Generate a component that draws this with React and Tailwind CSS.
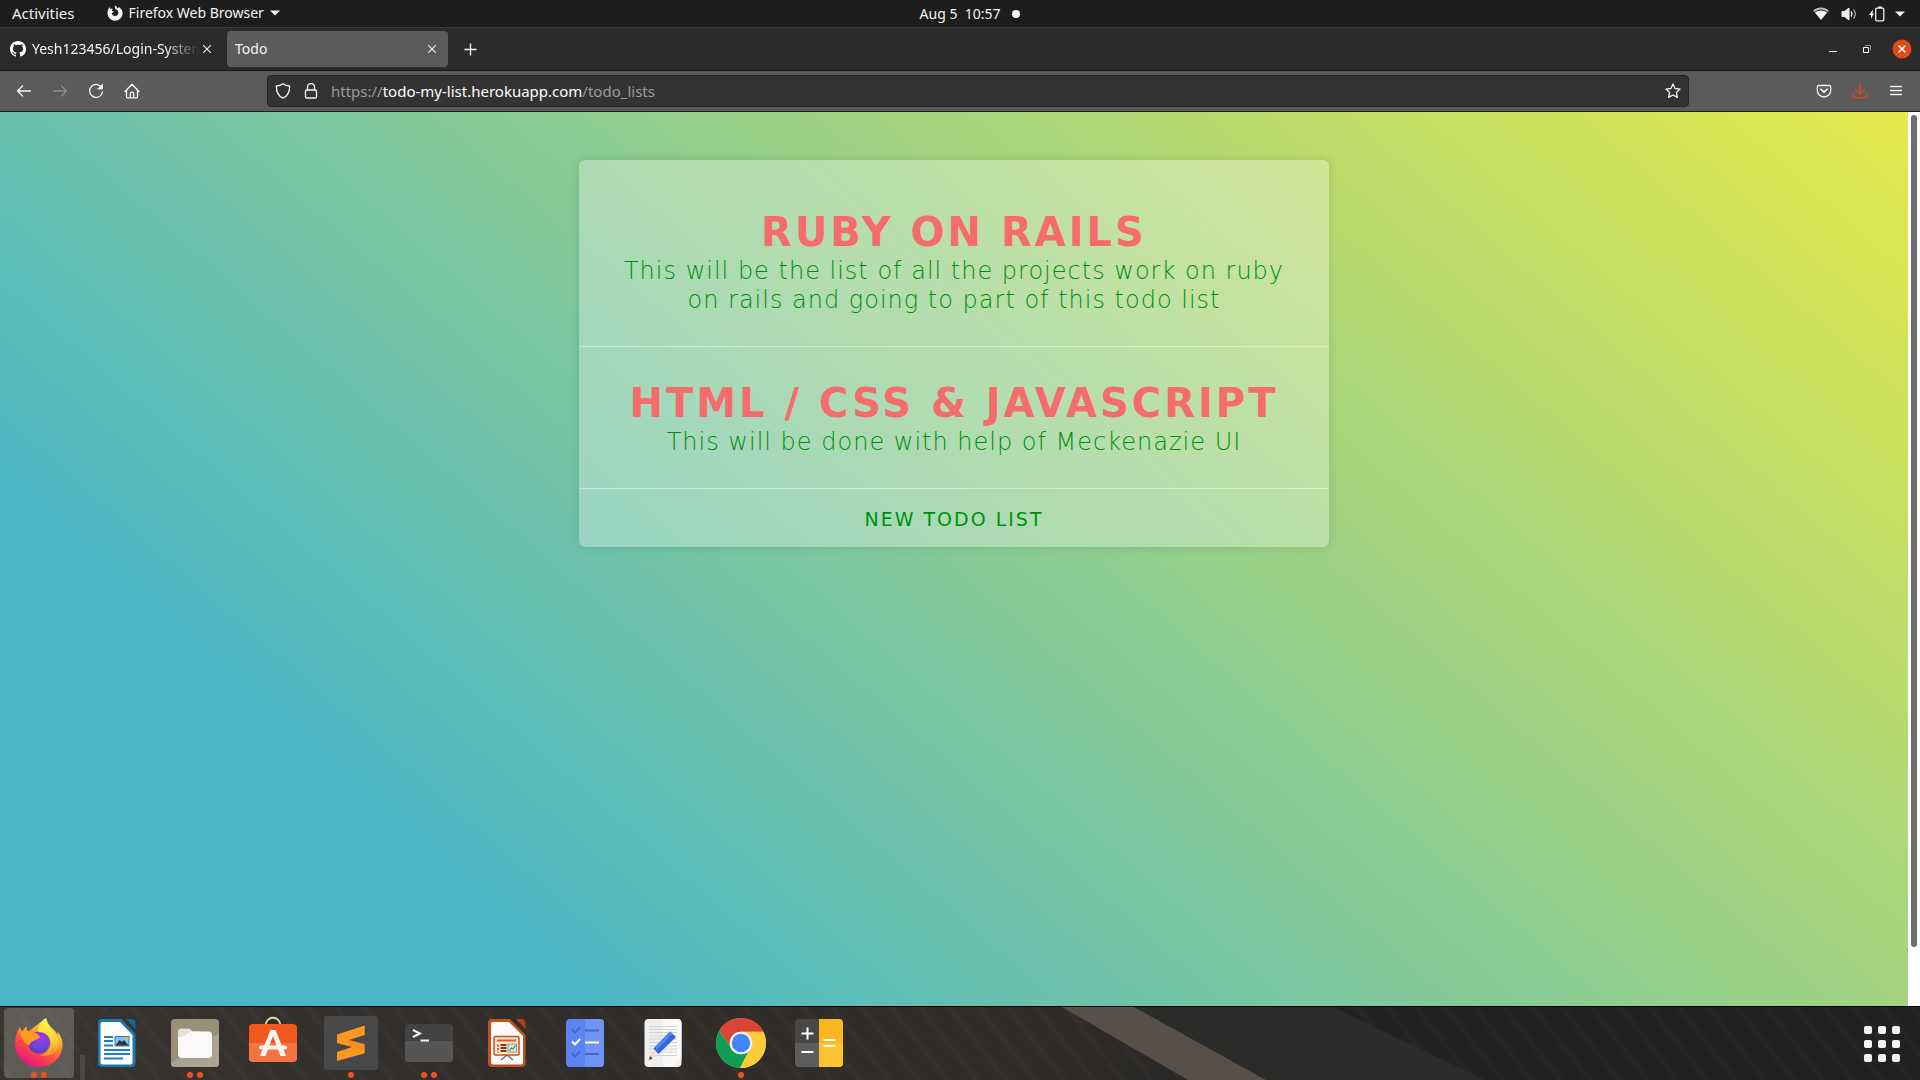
import React from "react";

const lists = [
  {
    title: "Ruby on Rails",
    text: "This will be the list of all the projects work on ruby on rails and going to part of this todo list",
  },
  {
    title: "HTML / CSS & JavaScript",
    text: "This will be done with help of Meckenazie UI",
  },
];

function Caret() {
  return (
    <svg width="10" height="6" viewBox="0 0 10 6" fill="#f2f2f2">
      <path d="M0 .5h10L5 5.5z" />
    </svg>
  );
}

function TopBar() {
  return (
    <header className="grid h-7 shrink-0 grid-cols-3 items-center border-b border-[#3c3c3c] bg-[#1d1d1d] text-sm text-[#f2f2f2]">
      <div className="flex items-center gap-8 pl-3">
        <button type="button" className="text-[15px]">Activities</button>
        <button type="button" className="flex items-center gap-1.5">
          <svg width="16" height="16" viewBox="0 0 16 16" fill="#f2f2f2">
            <path d="M8 .3c1.300.8 2 1.800 2.200 2.900 1-.1 1.500-.5 1.700-1.200C14.300 3.500 15.600 5.500 15.600 8.200A7.500 7.500 0 0 1 8 15.800 7.500 7.500 0 0 1 .5 8.200C.5 5.900 1.300 3.800 2.800 2.100c.1.900.4 1.500.9 1.900.7-.2 1.400-.2 2 0-.5.8-.9 1.300-.7 2 .5.3 1.200.3 1.900.4-.2.9-1.500 1.200-2.100 1.700.1 1.800 1.500 3 3.200 3 2 0 3.400-1.400 3.400-3.300 0-1.700-1-2.700-2.200-3.200C8.100 4.100 7.500 2.400 8 .3z" />
          </svg>
          <span>Firefox Web Browser</span>
          <Caret />
        </button>
      </div>
      <button type="button" className="flex items-center justify-center gap-3 pl-5">
        <span className="whitespace-pre">Aug 5  10:57</span>
        <span className="size-2 rounded-full bg-[#f2f2f2]" />
      </button>
      <button type="button" aria-label="System menu" className="flex items-center justify-end gap-2.5 pr-[15px]">
        <span className="flex items-center gap-3">
          <svg width="16" height="14" viewBox="0 0 16 14" fill="#f2f2f2">
            <path d="M0 3.800C4.500-.6 11.500-.6 16 3.800L14.700 5C10.900 1.600 5.100 1.600 1.300 5z" opacity=".75" />
            <path d="M1.800 5.600C5.400 2.700 10.600 2.700 14.200 5.600L8 13z" />
          </svg>
          <svg width="16" height="14" viewBox="0 0 16 14" fill="none" stroke="#f2f2f2">
            <path d="M1 4.500h2.500L8 1v12L3.500 9.500H1z" fill="#f2f2f2" />
            <path d="M10 4.500c1.200 1.500 1.200 3.500 0 5" strokeWidth="1.300" />
            <path d="M12.500 2.500c2.200 2.700 2.200 6.300 0 9" strokeWidth="1.200" opacity=".7" />
          </svg>
          <svg width="16" height="16" viewBox="0 0 16 16">
            <path d="M4 3.500 0 9h2v4l3-5.500H3.500z" fill="#f2f2f2" />
            <rect x="6.700" y="2.200" width="8.100" height="12.600" rx="1.200" fill="none" stroke="#f2f2f2" strokeWidth="1.300" />
            <path d="M9 .5h4v1.500H9z" fill="#f2f2f2" />
          </svg>
        </span>
        <Caret />
      </button>
    </header>
  );
}

function Cross() {
  return (
    <svg width="8" height="8" viewBox="0 0 8 8" stroke="#eee" strokeWidth="1.100">
      <path d="M0 0 8 8M8 0 0 8" />
    </svg>
  );
}

function TabBar() {
  return (
    <nav aria-label="Tabs" className="flex h-[43px] shrink-0 items-center border-b border-[#161616] bg-[#2b2b2b] text-sm text-[#f5f5f5]">
      <div className="flex h-9 w-[223px] items-center gap-1 pl-2.5">
        <svg width="16" height="16" viewBox="0 0 16 16" fill="#fff" className="shrink-0">
          <path d="M8 0C3.580 0 0 3.580 0 8c0 3.540 2.290 6.530 5.470 7.590.4.070.55-.17.55-.38 0-.19-.01-.82-.01-1.490-2.010.37-2.530-.49-2.690-.94-.09-.23-.48-.94-.82-1.130-.28-.15-.68-.52-.01-.53.63-.01 1.080.58 1.230.82.72 1.210 1.870.87 2.330.66.070-.52.28-.87.51-1.070-1.780-.2-3.640-.89-3.640-3.950 0-.87.31-1.590.82-2.150-.08-.2-.36-1.020.08-2.120 0 0 .67-.21 2.200.82.64-.18 1.320-.27 2-.27s1.360.09 2 .27c1.530-1.040 2.200-.82 2.200-.82.44 1.100.16 1.920.08 2.120.51.56.82 1.270.82 2.150 0 3.070-1.870 3.750-3.650 3.950.29.25.54.73.54 1.480 0 1.070-.01 1.930-.01 2.200 0 .21.15.46.55.38A8.010 8.010 0 0 0 16 8c0-4.420-3.580-8-8-8z" />
        </svg>
        <a href="#github" className="w-[169px] overflow-hidden pl-0.5 whitespace-nowrap [mask-image:linear-gradient(to_right,black_80%,transparent)]">
          Yesh123456/Login-System
        </a>
        <button type="button" aria-label="Close Yesh123456 tab">
          <Cross />
        </button>
      </div>
      <div className="ml-1 flex h-9 w-[221px] items-center justify-between rounded bg-[#5b5b5b] pl-2 pr-3">
        <a href="#todo">Todo</a>
        <button type="button" aria-label="Close Todo tab">
          <Cross />
        </button>
      </div>
      <button type="button" aria-label="New tab" className="ml-4">
        <svg width="13" height="13" viewBox="0 0 13 13" stroke="#fff" strokeWidth="1.300">
          <path d="M6.500.5v12M.5 6.500h12" />
        </svg>
      </button>
      <div className="ml-auto flex items-center gap-5 pr-2">
        <div className="flex items-center gap-6">
          <button type="button" aria-label="Minimize">
            <svg width="10" height="10" viewBox="0 0 10 10" fill="#fff">
              <path d="M1 7h8v1H1z" />
            </svg>
          </button>
          <button type="button" aria-label="Restore">
            <svg width="10" height="10" viewBox="0 0 10 10" fill="none">
              <path d="M3 1.500h5.500v5" stroke="#999" />
              <path d="M1.500 3.500h5v5h-5z" stroke="#fff" />
            </svg>
          </button>
        </div>
        <button type="button" aria-label="Close window">
          <svg width="20" height="20" viewBox="0 0 20 20">
            <circle cx="10" cy="10" r="9.500" fill="#df4a16" />
            <path d="m6.500 6.500 7 7M13.500 6.500l-7 7" stroke="#fff" strokeWidth="1.500" />
          </svg>
        </button>
      </div>
    </nav>
  );
}

function Line({ size = 16, color = "#f5f5f5", children }) {
  return (
    <svg width={size} height={size} viewBox="0 0 16 16" fill="none" stroke={color} strokeWidth="1.300" strokeLinecap="round" strokeLinejoin="round" className="shrink-0">
      {children}
    </svg>
  );
}

function Toolbar() {
  return (
    <div className="flex h-[41px] shrink-0 items-center border-b border-[#202020] bg-[#5b5b5b]">
      <div className="flex w-[267px] items-center gap-5 pl-4">
        <button type="button" aria-label="Back">
          <Line>
            <path d="M14.500 8h-13M6.500 3 1.500 8l5 5" />
          </Line>
        </button>
        <button type="button" aria-label="Forward" disabled>
          <Line color="#8e8e8e">
            <path d="M1.500 8h13M9.500 3l5 5-5 5" />
          </Line>
        </button>
        <button type="button" aria-label="Reload">
          <Line>
            <path d="M14 5.200A6.500 6.500 0 1 0 14.500 9" />
            <path d="M14.500 1.500v4.500H10z" fill="#f5f5f5" strokeWidth=".8" />
          </Line>
        </button>
        <button type="button" aria-label="Home">
          <Line>
            <path d="M1 8.500 8 1.200l7 7.300M2.500 7.500v6.300a1 1 0 0 0 1 1h9a1 1 0 0 0 1-1V7.500" />
            <path d="M6.300 14.500v-3.700a1.700 1.700 0 0 1 3.400 0v3.700" />
          </Line>
        </button>
      </div>
      <div className="flex h-8 flex-1 items-center gap-3 rounded border border-[#222] bg-[#333] px-[7px]">
        <Line>
          <path d="M8 .8c2 1.500 4.300 2.100 6.600 2.200.2 6-1.800 10-6.600 12.200C3.200 13 1.200 9 1.400 3 3.700 2.900 6 2.300 8 .8z" />
        </Line>
        <Line>
          <path d="M4.500 7V4a3.500 3.500 0 0 1 7 0v3" />
          <rect x="2.500" y="7" width="11" height="8" rx="1.200" />
        </Line>
        <label className="relative flex-1 text-[15px] text-[#9b9b9b]">
          <span className="whitespace-nowrap">
            https://<span className="text-white">todo-my-list.herokuapp.com</span>/todo_lists
          </span>
          <input type="text" aria-label="Address" className="absolute inset-0 w-full bg-transparent outline-none" />
        </label>
        <button type="button" aria-label="Bookmark this page">
          <Line>
            <path d="m8 1 2.100 4.500 4.900.6-3.600 3.400 1 4.900L8 12l-4.400 2.400 1-4.900L1 6.100l4.900-.6z" />
          </Line>
        </button>
      </div>
      <div className="flex w-[231px] items-center justify-end gap-5 pr-4">
        <button type="button" aria-label="Save to Pocket">
          <Line>
            <path d="M2.500 2.500h11a1.200 1.200 0 0 1 1.200 1.200v3.600a6.700 6.700 0 0 1-13.400 0V3.700a1.200 1.200 0 0 1 1.200-1.200z" />
            <path d="m4.800 6.200 3.200 3 3.200-3" strokeWidth="1.600" />
          </Line>
        </button>
        <button type="button" aria-label="Downloads">
          <Line color="#df4a16">
            <path d="M8 .7v10.300M3.800 7 8 11l4.200-4M1.500 11.500v1.700a1.500 1.500 0 0 0 1.500 1.500h10a1.500 1.500 0 0 0 1.500-1.500v-1.700" />
          </Line>
        </button>
        <button type="button" aria-label="Application menu">
          <Line>
            <path d="M2.500 3.500h11M2.500 7.500h11M2.500 11.500h11" />
          </Line>
        </button>
      </div>
    </div>
  );
}

function TodoPage() {
  return (
    <div className="flex min-h-0 flex-1 bg-white">
      <div className="flex-1 overflow-hidden">
        <main className="h-[107%] bg-[linear-gradient(41deg,#4bb7c6_22%,#e5e94a_100%)] pt-12 font-['DejaVu_Sans',sans-serif]">
          <section className="mx-auto w-full max-w-[750px] rounded-md bg-white/30 pt-4 text-center shadow-[0_0_10px_rgba(0,0,0,0.12)]">
            {lists.map((list) => (
              <article key={list.title} className="border-b border-white/40 px-8 pt-8 pb-[31px]">
                <h1 className="text-[40px] leading-[48px] font-bold tracking-[3px] text-[#f66b6b] uppercase">
                  <a href="#list">{list.title}</a>
                </h1>
                <p className="pt-px text-2xl leading-[29px] font-extralight tracking-[1px] text-[#008f0c]">{list.text}</p>
              </article>
            ))}
            <a href="#new" className="block pt-[17px] pb-[15px] text-[19px] leading-[26px] tracking-[2px] text-[#008f0c] uppercase">
              New Todo List
            </a>
          </section>
        </main>
      </div>
      <div className="flex w-3 justify-center pt-[3px]">
        <div className="h-[calc(100%-59px)] w-1.5 rounded-full bg-[#6d6d6d]" />
      </div>
    </div>
  );
}

function Icon({ children }) {
  return (
    <svg width="56" height="56" viewBox="-4 -4 56 56">
      {children}
    </svg>
  );
}

const apps = [
  {
    name: "Firefox",
    dots: 2,
    active: true,
    icon: (
      <Icon>
        <defs>
          <linearGradient id="ffBody" x1=".85" y1=".05" x2=".3" y2="1">
            <stop offset="0" stopColor="#fff44f" />
            <stop offset=".35" stopColor="#ffa02e" />
            <stop offset=".65" stopColor="#ff4b3e" />
            <stop offset="1" stopColor="#e3128a" />
          </linearGradient>
          <linearGradient id="ffTail" x1=".5" y1="0" x2=".6" y2="1">
            <stop offset="0" stopColor="#fff44f" />
            <stop offset=".6" stopColor="#ffd235" />
            <stop offset="1" stopColor="#ff8f2a" />
          </linearGradient>
          <radialGradient id="ffGlobe" cx=".6" cy=".3" r=".8">
            <stop offset="0" stopColor="#a238e8" />
            <stop offset=".6" stopColor="#6b45d8" />
            <stop offset="1" stopColor="#4a3bb0" />
          </radialGradient>
        </defs>
        <path d="M5 8c.5 2 1.500 3.500 2.500 4.500C9 10 10 8.500 11.500 7.500c-.2 2.500.5 4 2 5L31-1c1.500 6 5 9 9 13 1 1.200 2 2.500 2.500 4 .3-1.500.2-2.500 0-3.500 4 5 5.500 10 5 15C46.500 39 37 48 24 48S0 38 0 25C0 18 2 12 5 8z" fill="url(#ffBody)" />
        <circle cx="24" cy="23.500" r="11" fill="url(#ffGlobe)" />
        <path d="M31-1c-6 4-8.500 9-7.500 14 6 0 10.500 3 12 8 1.500 7-3 14-10.500 15.500 10 2 18-3 19.500-11C45 15 33.500 12 31-1z" fill="url(#ffTail)" />
        <path d="M5 8c.5 2 1.500 3.500 2.500 4.500C9 10 10 8.500 11.500 7.500c-.2 2.500.5 4 2 5 3.500.2 6 .6 8 2 1.500 1.200 2.500 2.300 3.500 2.500-.3 2.800-3.500 3.500-6 4.500-3 1.300-4 2.500-4.500 5C10 25 4 19 5 8z" fill="#ff9a1f" />
      </Icon>
    ),
  },
  {
    name: "LibreOffice Writer",
    icon: (
      <Icon>
        <path d="M9 0h19l14.500 15v29a4 4 0 0 1-4 4H9a4 4 0 0 1-4-4V4a4 4 0 0 1 4-4z" fill="#1a77b0" />
        <path d="M9.500 3H27l12.500 13v27.500a2 2 0 0 1-2 2h-28a2 2 0 0 1-2-2V5a2 2 0 0 1 2-2z" fill="#fdfdfd" />
        <path d="M33 0h6a4 4 0 0 1 3.500 4v6z" fill="#0f69a3" />
        <g fill="#1b7fc0">
          <path d="M11 17h9v2h-9zM11 21h9v2h-9zM11 25.500h9v2h-9zM11 30h26v2H11zM11 34h26v2H11zM11 38.500h19v2H11z" />
          <path d="M21.500 17h15v10.500h-15z" />
        </g>
        <path d="M22.500 18h13v8.500h-13z" fill="#80c3ec" />
        <circle cx="34" cy="19.500" r="1.500" fill="#f5c211" />
        <path d="m22.500 26.500 4-5.500 2.500 2 2-2 4.500 5.500z" fill="#333" />
      </Icon>
    ),
  },
  {
    name: "Files",
    dots: 2,
    icon: (
      <Icon>
        <rect width="48" height="48" rx="4" fill="#989079" />
        <path d="M0 44 48 14v30a4 4 0 0 1-4 4H4a4 4 0 0 1-4-4z" fill="#aaa391" />
        <path d="M7 13a3.500 3.500 0 0 1 3.500-3.500h7c2.500 0 2.500 3 5 3H30v8H7z" fill="#e4e0d7" />
        <path d="M7 18c3 0 7-.5 9-3 1.500-2 2.500-2.500 4-2.500h17a4 4 0 0 1 4 4V35a4 4 0 0 1-4 4H11a4 4 0 0 1-4-4z" fill="#faf9f7" />
      </Icon>
    ),
  },
  {
    name: "Ubuntu Software",
    icon: (
      <Icon>
        <path d="M16.500 7C16.500-4 31.500-4 31.500 7" fill="none" stroke="#e8d5ae" strokeWidth="1.800" />
        <rect y="5" width="48" height="38" rx="4" fill="#f1591f" />
        <path d="M0 24h48v15a4 4 0 0 1-4 4H4a4 4 0 0 1-4-4z" fill="#f37342" />
        <path d="M21.500 11h5L37 37h-5.500L24 17l-7.500 20H11z" fill="#fdf5f0" />
        <rect x="10" y="26.500" width="28" height="4" rx="2" fill="#fdf5f0" />
      </Icon>
    ),
  },
  {
    name: "Sublime Text",
    dots: 1,
    icon: (
      <Icon>
        <rect x="-3" y="-3" width="54" height="54" rx="3" fill="#484848" />
        <path d="M10 15.500 37.700 6.500v9.500L22 21l15.700 4.300v9L10 42v-9l15-5L10 24z" fill="#ff9820" />
        <path d="m22 21 15.700 4.300v6L22 27.500z" fill="#ef8216" opacity=".5" />
      </Icon>
    ),
  },
  {
    name: "Terminal",
    dots: 2,
    icon: (
      <Icon>
        <rect y="5" width="48" height="38" rx="4" fill="#434343" />
        <path d="M0 22h48v17a4 4 0 0 1-4 4H4a4 4 0 0 1-4-4z" fill="#555" />
        <path d="m8 11 7 3.500L8 18" fill="none" stroke="#f0f0f0" strokeWidth="2" />
        <path d="M15.500 20.500h8.500v2h-8.500z" fill="#f0f0f0" />
      </Icon>
    ),
  },
  {
    name: "LibreOffice Impress",
    icon: (
      <Icon>
        <path d="M9 0h18l15.500 16v28a4 4 0 0 1-4 4H9a4 4 0 0 1-4-4V4a4 4 0 0 1 4-4z" fill="#c4501c" />
        <path d="M10 3h16l14 14v26.500a2 2 0 0 1-2 2H10a2 2 0 0 1-2-2V5a2 2 0 0 1 2-2z" fill="#fafafa" />
        <path d="M33 0h6a4 4 0 0 1 3.500 4v6z" fill="#b5430f" />
        <path d="m24 36-6 5m6-5 6 5" stroke="#777" strokeWidth="1.500" />
        <rect x="11" y="17.500" width="25" height="18.500" rx="1.500" fill="#fbe2d0" stroke="#c4501c" strokeWidth="1.500" />
        <path d="M14 20.500h19v2H14zM14 25.500h2v2h-2zM14 29h2v2h-2zM14 32.500h2v1h-2z" fill="#d8602b" />
        <path d="M17.500 25h6v2h-6zM17.500 28h6v2h-6zM17.500 31h6v2h-6z" fill="#8c3511" />
        <rect x="25" y="25" width="8.500" height="8" fill="#dce8dc" stroke="#777" strokeWidth=".7" />
        <path d="m26.500 31.500 2-2.500 1.500 1 2.500-3.500" fill="none" stroke="#2a9434" strokeWidth="1.200" />
      </Icon>
    ),
  },
  {
    name: "To Do",
    icon: (
      <Icon>
        <rect x="5" width="38" height="48" rx="4" fill="#5b83f2" />
        <path d="M24 0h15a4 4 0 0 1 4 4v40a4 4 0 0 1-4 4H24z" fill="#7094f6" />
        <g fill="none" strokeWidth="1.800">
          <path d="m11 10.500 3 3 5-5.500M11 34.500l3 3 5-5.500M24 11.500h14M24 35h14" stroke="#4667c2" />
          <path d="m11 22.500 3 3 5-5.500M24 23.500h14" stroke="#fff" strokeWidth="2" />
        </g>
      </Icon>
    ),
  },
  {
    name: "Text Editor",
    icon: (
      <Icon>
        <rect x="5.500" width="37" height="48" rx="4" fill="#efefef" />
        <path d="M24 0h14.500a4 4 0 0 1 4 4v36l-8 8H24z" fill="#f8f8f8" />
        <path d="M10 7.500h28M10 10.500h28M10 13.500h28M10 17h28M10 20h28M10 23.500h28M10 27h28M10 30h28M10 33h28M10 36.500h28" stroke="#d2d2d2" />
        <path d="m10 41 2.500-9.500 5 5.500z" fill="#fbd9b8" />
        <path d="m10 41 1-4 2.500 2.500z" fill="#444" />
        <path d="M14.500 29.500 31 12.500l6 5.500-17.500 17z" fill="#2f66dc" />
        <path d="M16 28 31 12.500l2.500 2.200L18 31z" fill="#5385ee" />
      </Icon>
    ),
  },
  {
    name: "Google Chrome",
    dots: 1,
    icon: (
      <Icon>
        <circle cx="24" cy="24" r="25" fill="#fdcb3a" />
        <path d="M2.300 11.500A25 25 0 0 1 46.300 12.700H24A11.300 11.300 0 0 0 14 29z" fill="#dc4437" />
        <path d="M2.300 11.500 14.200 29.600C17 35 24 37 31 33L23 49A25 25 0 0 1 2.300 11.500z" fill="#109d58" />
        <path d="M33.800 29.600 23 49a25 25 0 0 0 23.300-36.300H24z" fill="#fdcb3a" />
        <circle cx="24" cy="24" r="11.300" fill="#f3f3f3" />
        <circle cx="24" cy="24" r="9.200" fill="#4285f4" />
      </Icon>
    ),
  },
  {
    name: "Calculator",
    icon: (
      <Icon>
        <path d="M4 0h20v24H0V4a4 4 0 0 1 4-4z" fill="#474747" />
        <path d="M0 24h24v24H4a4 4 0 0 1-4-4z" fill="#5d5d5d" />
        <path d="M24 0h20a4 4 0 0 1 4 4v40a4 4 0 0 1-4 4H24z" fill="#fbb722" />
        <path d="M24 24h24v20a4 4 0 0 1-4 4H24z" fill="#fcc230" />
        <path d="M6.500 14.500h12M12.500 8.500v12M6.500 33h12M28.500 21h12M28.500 27h12" stroke="#fff" strokeWidth="2" />
      </Icon>
    ),
  },
];

function Dock() {
  return (
    <footer className="relative flex h-[74px] shrink-0 items-start border-t border-black bg-[repeating-linear-gradient(52deg,transparent_0_7px,rgba(255,255,255,0.02)_9px_12px,transparent_15px_23px),linear-gradient(100deg,#38342f_0%,#2f2c2a_30%,#302c2a_54%,#282725_62%,#212224_72%,#202123_100%)] px-1 pt-px">
      <svg className="absolute inset-0 size-full" viewBox="0 0 1920 73" preserveAspectRatio="none">
        <path d="M1134 0h199l152 73H1266z" fill="#2b2b2a" />
        <path d="M1062 0h72l132 73h-78z" fill="#575049" />
        <path d="M80 48h5v25h-5z" fill="#4c4842" />
      </svg>
      <ul className="relative flex gap-2">
        {apps.map((app) => (
          <li key={app.name}>
            <button
              type="button"
              aria-label={app.name}
              className={
                app.active
                  ? "relative flex size-[70px] items-center justify-center rounded bg-white/20"
                  : "relative flex size-[70px] items-center justify-center rounded"
              }
            >
              {app.icon}
              <span className="absolute inset-x-0 bottom-0 flex justify-center gap-1">
                {Array.from({ length: app.dots || 0 }, (_, i) => (
                  <span key={i} className="size-1.5 rounded-full bg-[#e95420]" />
                ))}
              </span>
            </button>
          </li>
        ))}
      </ul>
      <button type="button" aria-label="Show Applications" className="relative mr-3 ml-auto grid grid-cols-3 gap-1.5 self-center p-1">
        {Array.from({ length: 9 }, (_, i) => (
          <span key={i} className="size-2 rounded-xs bg-[#f2f2f0]" />
        ))}
      </button>
    </footer>
  );
}

export default function App() {
  return (
    <div className="flex h-screen flex-col overflow-hidden font-['Noto_Sans',sans-serif]">
      <TopBar />
      <TabBar />
      <Toolbar />
      <TodoPage />
      <Dock />
    </div>
  );
}
